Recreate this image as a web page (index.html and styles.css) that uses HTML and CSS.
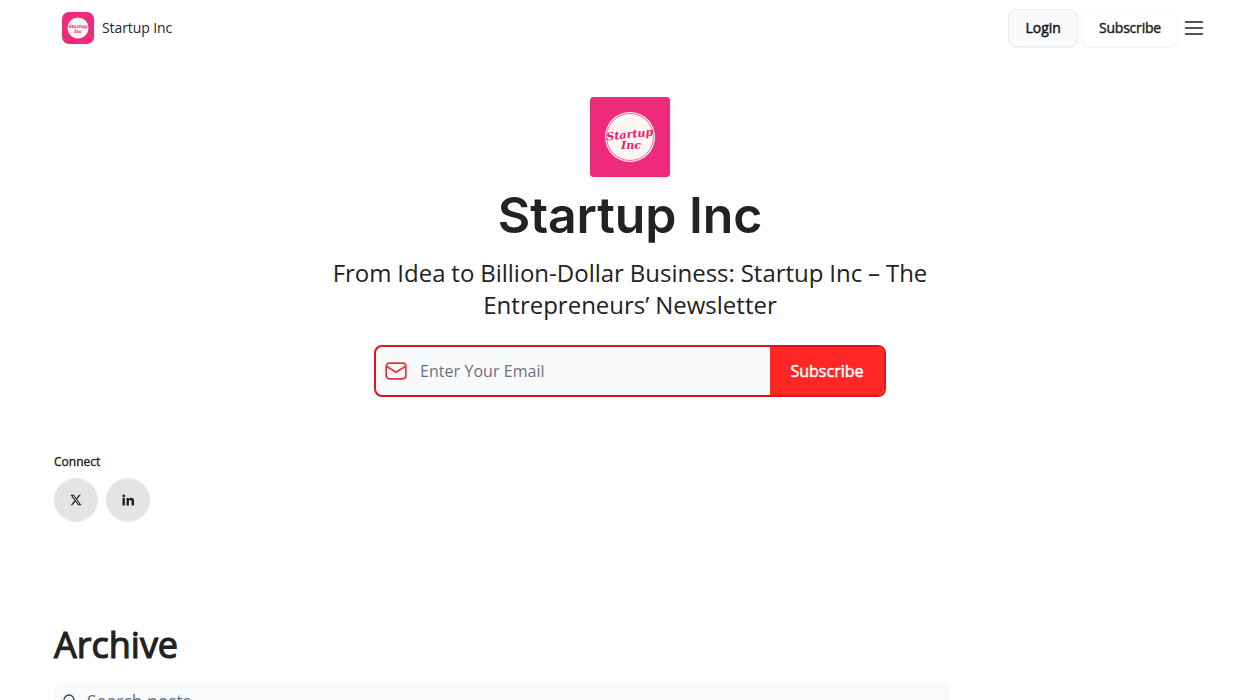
FILE: index.html
```html
<!DOCTYPE html>
<html lang="en">
<head>
    <meta charset="UTF-8">
    <meta name="viewport" content="width=device-width, initial-scale=1.0">
    <title>Startup Inc</title>
    <link rel="stylesheet" href="styles.css">
</head>
<body>
<header class="topbar">
    <a class="brand" href="#">
        <svg class="brand-logo" viewBox="0 0 32 32">
            <rect width="32" height="32" rx="7" fill="#ee2a7b"/>
            <circle cx="16" cy="16" r="10.5" fill="#fdf3f3"/>
            <text x="16" y="15.5" class="logo-word" font-size="4.6">Startup</text>
            <text x="16" y="21" class="logo-word" font-size="4.6">Inc</text>
        </svg>
        <span>Startup Inc</span>
    </a>
    <nav class="topnav">
        <a class="btn btn-login heavy" href="#">Login</a>
        <a class="btn btn-sub heavy" href="#">Subscribe</a>
        <svg class="menu-icon" viewBox="0 0 24 24" fill="none" stroke="#1f1f1f" stroke-width="1.6" stroke-linecap="round">
            <path d="M3.5 6h17M3.5 12h17M3.5 18h17"/>
        </svg>
    </nav>
</header>

<section class="hero">
    <svg class="hero-logo" viewBox="0 0 80 80">
        <rect width="80" height="80" rx="3" fill="#ee2a7b"/>
        <circle cx="40" cy="40" r="25.5" fill="#fdf6f3" stroke="#ee2a7b" stroke-width="1"/>
        <circle cx="40" cy="40" r="23.5" fill="none" stroke="#ee2a7b" stroke-width="0.7"/>
        <text x="40" y="41" class="logo-word" font-size="11" transform="rotate(-6 40 40)">Startup</text>
        <text x="41" y="52" class="logo-word" font-size="11">Inc</text>
    </svg>
    <h1 class="hero-title">Startup Inc</h1>
    <p class="hero-text">From Idea to Billion-Dollar Business: Startup Inc – The Entrepreneurs’ Newsletter</p>
    <form class="signup">
        <div class="signup-field">
            <svg class="mail-icon" viewBox="0 0 22 18" fill="none" stroke="#e0343a" stroke-width="1.7" stroke-linejoin="round" stroke-linecap="round">
                <rect x="1.2" y="1.2" width="19.6" height="15.6" rx="3"/>
                <path d="M1.8 4.5 11 10.2l9.2-5.7"/>
            </svg>
            <span class="placeholder">Enter Your Email</span>
        </div>
        <button class="signup-btn heavy" type="button">Subscribe</button>
    </form>
</section>

<section class="connect">
    <p class="connect-label heavy">Connect</p>
    <div class="socials">
        <a class="social" href="#">
            <svg viewBox="0 0 24 24" width="12" height="12" fill="#1f1f1f"><path d="M18.2 1.5h3.4l-7.4 8.9L23 22.5h-6.8l-5.4-7.4-6.2 7.4H1.2l7.9-9.5L.8 1.5h7l4.9 6.8zm-1.2 19h1.9L6.9 3.4H4.9z"/></svg>
        </a>
        <a class="social" href="#">
            <svg viewBox="0 0 24 24" width="12" height="12" fill="#1f1f1f"><path d="M1 8h4.8v15H1zM3.4 1a2.7 2.7 0 1 1 0 5.5 2.7 2.7 0 0 1 0-5.5zM9 8h4.6v2.1c.7-1.3 2.3-2.5 4.6-2.5 4.9 0 5.8 3.1 5.8 7.2V23h-4.8v-7.2c0-1.8-.1-3.9-2.5-3.9s-2.9 1.9-2.9 3.8V23H9z"/></svg>
        </a>
    </div>
</section>

<section class="archive">
    <h2 class="archive-title heavy">Archive</h2>
    <div class="search">
        <svg class="search-icon" viewBox="0 0 16 16" fill="none" stroke="#374151" stroke-width="1.3" stroke-linecap="round">
            <circle cx="7" cy="7" r="5"/>
            <path d="m11 11 3.5 3.5"/>
        </svg>
        <span>Search posts</span>
    </div>
</section>
</body>
</html>
```

FILE: styles.css
```css
html, body {
    height: 700px;
    overflow: hidden;
}
body {
    margin: 0;
    background: #fff;
    color: #1f1f1f;
    font-family: "Open Sans", sans-serif;
}
a {
    color: inherit;
    text-decoration: none;
}
.logo-word {
    font-family: "DejaVu Serif", serif;
    font-weight: 700;
    font-style: italic;
    fill: #e0246f;
    text-anchor: middle;
}
/* regular weight thickened a little, keeps the narrow regular widths */
.heavy {
    font-weight: 400;
    -webkit-text-stroke: 0.032em currentColor;
}

/* top bar */
.topbar {
    display: flex;
    align-items: center;
    justify-content: space-between;
    height: 55px;
    padding: 0 54px 1px 62px;
}
.brand {
    display: flex;
    align-items: center;
    gap: 8px;
    font-size: 14px;
    letter-spacing: -0.1px;
}
.brand-logo {
    width: 32px;
    height: 32px;
    margin-top: 1px;
}
.topnav {
    display: flex;
    align-items: center;
    gap: 4px;
    margin-top: 1px;
}
.btn {
    display: block;
    padding: 0 16px;
    height: 36px;
    line-height: 36px;
    font-size: 14px;
    border-radius: 8px;
    border: 1px solid transparent;
    box-shadow: 0 1px 2px rgba(0, 0, 0, 0.06);
}
.btn-login {
    background: #f8f9fb;
    border-color: #e9ebee;
    color: #111;
}
.btn-sub {
    background: #fff;
    border-color: #fafafa;
    letter-spacing: -0.2px;
}
.menu-icon {
    width: 24px;
    height: 24px;
}

/* hero */
.hero {
    display: flex;
    flex-direction: column;
    align-items: center;
    padding-top: 41px;
}
.hero-logo {
    width: 80px;
    height: 80px;
    border-radius: 3px;
    box-shadow: 0 4px 10px rgba(0, 0, 0, 0.05);
}
.hero-title {
    margin: 6px 0 0;
    font-family: Inter, sans-serif;
    font-size: 50px;
    line-height: 64px;
    font-weight: 600;
    letter-spacing: -0.1px;
    color: #222;
}
.hero-text {
    width: 640px;
    margin: 10px 0 0;
    font-size: 24px;
    line-height: 32px;
    word-spacing: -0.4px;
    text-align: center;
    color: #222;
}
.signup {
    display: flex;
    width: 512px;
    height: 52px;
    margin-top: 24px;
    box-sizing: border-box;
    border: 2px solid #d8171f;
    border-radius: 8px;
    overflow: hidden;
    background: #f8f9fb;
}
.signup-field {
    flex: 1;
    display: flex;
    align-items: center;
    gap: 13px;
    padding-left: 9px;
}
.mail-icon {
    width: 22px;
    height: 18px;
}
.placeholder {
    font-size: 16px;
    letter-spacing: 0.05px;
    color: #6b7280;
}
.signup-btn {
    width: 114px;
    border: 0;
    padding: 0;
    background: #ff2626;
    color: #fff;
    font-family: inherit;
    font-size: 16px;
}

/* connect */
.connect {
    margin: 56px 0 0 54px;
}
.connect-label {
    margin: 0;
    font-size: 12px;
    line-height: 18px;
}
.socials {
    display: flex;
    gap: 8px;
    margin-top: 7px;
}
.social {
    display: flex;
    align-items: center;
    justify-content: center;
    width: 44px;
    height: 44px;
    border-radius: 50%;
    background: #e4e4e4;
}

/* archive */
.archive {
    width: 896px;
    margin: 96px 0 0 54px;
}
.archive-title {
    margin: 0;
    font-size: 36px;
    line-height: 54px;
    color: #222;
}
.search {
    display: flex;
    align-items: center;
    gap: 9px;
    height: 38px;
    margin-top: 10px;
    padding-left: 8px;
    border-radius: 8px;
    background: #f9fafb;
    font-size: 17.5px;
    color: #6b7280;
}
.search-icon {
    width: 16px;
    height: 16px;
}
```
